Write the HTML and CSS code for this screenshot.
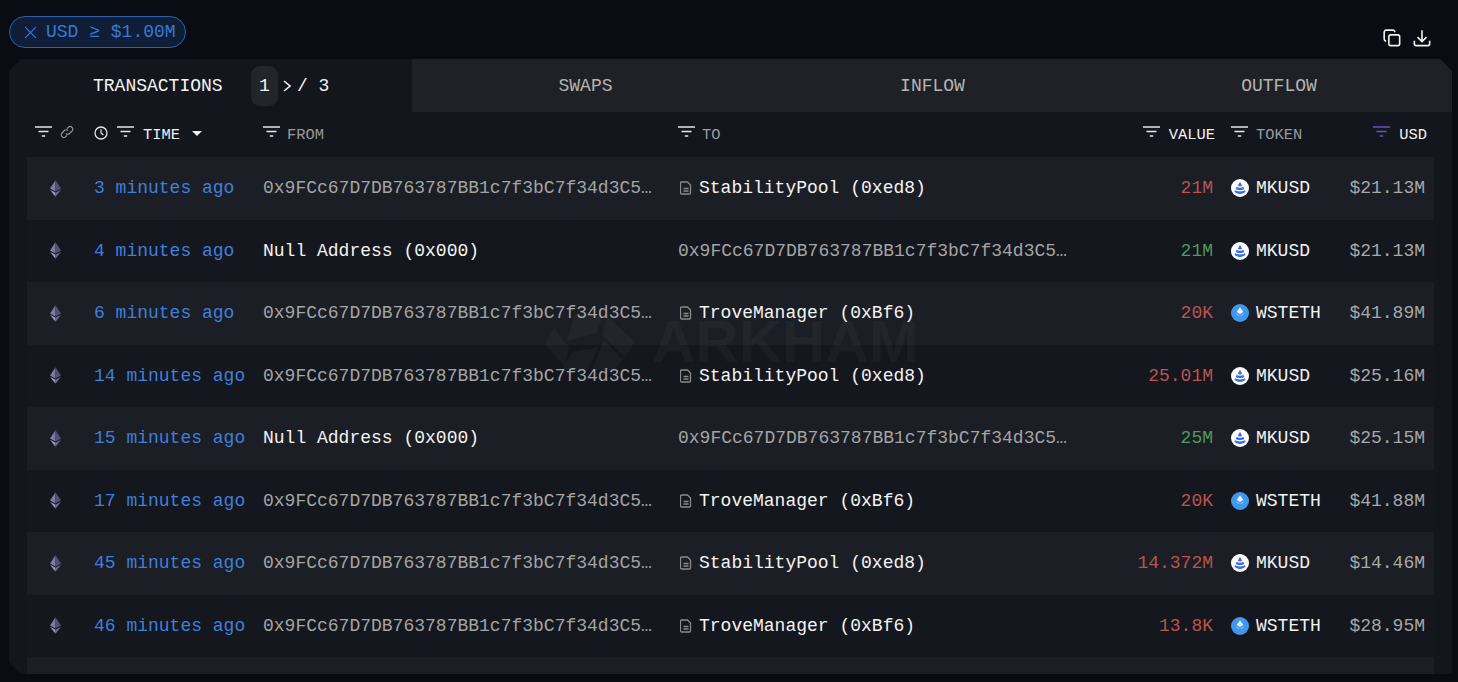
FILE: index.html
```html
<!DOCTYPE html>
<html lang="en">
<head>
<meta charset="utf-8">
<title>Transactions</title>
<link rel="stylesheet" href="styles.css">
</head>
<body>
<svg class="defs" width="0" height="0" aria-hidden="true">
  <symbol id="filter" viewBox="0 0 17 12"><path d="M0 1h17M3.500 5.500h10M6.800 10h3.400" fill="none" stroke="currentColor" stroke-width="1.700"/></symbol>
  <symbol id="eth" viewBox="0 0 12 18">
    <path d="M6 0 0 9l6 3.400z" fill="#7d7aa6"/><path d="M6 0l6 9-6 3.400z" fill="#53516f"/>
    <path d="M0 10.300 6 18v-4.400z" fill="#a09dc2"/><path d="M12 10.300 6 18v-4.400z" fill="#6f6c94"/>
  </symbol>
  <symbol id="doc" viewBox="0 0 12 14"><path d="M1.500 1h6l3 3v8a1 1 0 0 1-1 1h-8a1 1 0 0 1-1-1V2a1 1 0 0 1 1-1zM3.500 7.500h5M3.500 10h5" fill="none" stroke="#8a8a8a" stroke-width="1.300"/></symbol>
  <symbol id="mk" viewBox="0 0 18 18">
    <circle cx="9" cy="9" r="9" fill="#fff"/>
    <path d="M9 2.800 11.200 6.800a2.400 1.300 0 0 1-4.400 0z" fill="#3d6fe0"/>
    <path d="M5.700 7.800a3.600 1.700 0 0 0 6.600 0l1.100 2.200a5 2.200 0 0 1-8.800 0z" fill="#3d6fe0"/>
    <path d="M4 11.300a5.600 2 0 0 0 10 0l.6 1.300c-1 1.500-3.200 2.400-5.600 2.400s-4.600-.9-5.600-2.400z" fill="#3d6fe0"/>
  </symbol>
  <symbol id="st" viewBox="0 0 18 18">
    <circle cx="9" cy="9" r="9" fill="#3f97ee"/>
    <path d="M9 3.200 12.400 8 9 10 5.600 8z" fill="#e6f2fd"/>
    <path d="M4.900 9.300 9 11.700l4.100-2.400a4.600 4.600 0 0 1-8.200 0z" fill="#bcdcfa"/>
  </symbol>
</svg>

<div class="toolbar">
  <div class="chip">
    <svg class="chip-x" viewBox="0 0 12 12"><path d="M1 1l10 10M11 1 1 11" fill="none" stroke="currentColor" stroke-width="1.100"/></svg>
    <span>USD ≥ $1.00M</span>
  </div>
  <div class="actions">
    <svg class="act" viewBox="0 0 20 20"><rect x="6.500" y="6.500" width="12" height="12" rx="2" fill="none" stroke="currentColor" stroke-width="1.800"/><path d="M3.500 13.300A2.200 2.200 0 0 1 1.300 11V3.500A2.200 2.200 0 0 1 3.500 1.300H11a2.200 2.200 0 0 1 2.200 2.200" fill="none" stroke="currentColor" stroke-width="1.800"/></svg>
    <svg class="act" viewBox="0 0 20 20"><path d="M10 1.500v12M5 9l5 5 5-5M1.500 13v3.500a2 2 0 0 0 2 2h13a2 2 0 0 0 2-2V13" fill="none" stroke="currentColor" stroke-width="1.800"/></svg>
  </div>
</div>

<main class="panel">
  <div class="tabs">
    <div class="tab tab-active">
      <span class="tab-title">TRANSACTIONS</span>
      <span class="page-box">1</span>
      <svg class="page-next" viewBox="0 0 8 12"><path d="M1 1l6 5-6 5" fill="none" stroke="currentColor" stroke-width="1.500"/></svg>
      <span class="page-total">/ 3</span>
    </div>
    <div class="tab">SWAPS</div>
    <div class="tab">INFLOW</div>
    <div class="tab">OUTFLOW</div>
  </div>

  <div class="grid head">
    <div class="hc hc-first"><svg class="fi"><use href="#filter"/></svg>
      <svg class="link" viewBox="0 0 14 14"><path d="M6 8.500a2.500 2.500 0 0 0 3.600 0l2.400-2.500a2.600 2.600 0 0 0-3.700-3.700L7 3.600M8 5.500a2.500 2.500 0 0 0-3.600 0L2 8a2.600 2.600 0 0 0 3.700 3.700L7 10.400" fill="none" stroke="#9a9a9a" stroke-width="1.100"/></svg></div>
    <div class="hc"><svg class="clock" viewBox="0 0 14 14"><circle cx="7" cy="7" r="6" fill="none" stroke="currentColor" stroke-width="1.300"/><path d="M7 3.200V7l2.400 2" fill="none" stroke="currentColor" stroke-width="1.200"/></svg><svg class="fi"><use href="#filter"/></svg><span class="bright title">TIME</span><i class="caret"></i></div>
    <div class="hc"><svg class="fi"><use href="#filter"/></svg><span class="title tight">FROM</span></div>
    <div class="hc"><svg class="fi"><use href="#filter"/></svg><span class="title tight">TO</span></div>
    <div class="hc right shift-1"><svg class="fi"><use href="#filter"/></svg><span class="bright title">VALUE</span></div>
    <div class="hc pad"><svg class="fi"><use href="#filter"/></svg><span class="title snug">TOKEN</span></div>
    <div class="hc right shift-2"><svg class="fi fi-on"><use href="#filter"/></svg><span class="bright title">USD</span></div>
  </div>

  <div class="rows">
    <div class="watermark" aria-hidden="true">
      <svg class="wm-logo" viewBox="0 0 90 56">
        <path d="M30 0H58L52 19 22 27z M62 2 90 28 80 43 57 21z M59 26 78 46 69 56H47z M43 56H17L27 38 53 33z M20 53 0 30 9 14 24 33z" fill="currentColor"/>
      </svg>
      <span>ARKHAM</span>
    </div>

    <div class="grid row">
      <div class="c-eth"><svg class="eth"><use href="#eth"/></svg></div>
      <div class="time">3 minutes ago</div>
      <div class="addr">0x9FCc67D7DB763787BB1c7f3bC7f34d3C5…</div>
      <div class="name"><svg class="doc"><use href="#doc"/></svg>StabilityPool (0xed8)</div>
      <div class="val red">21M</div>
      <div class="tok"><svg class="ti"><use href="#mk"/></svg>MKUSD</div>
      <div class="usd">$21.13M</div>
    </div>
    <div class="grid row">
      <div class="c-eth"><svg class="eth"><use href="#eth"/></svg></div>
      <div class="time">4 minutes ago</div>
      <div class="name">Null Address (0x000)</div>
      <div class="addr">0x9FCc67D7DB763787BB1c7f3bC7f34d3C5…</div>
      <div class="val green">21M</div>
      <div class="tok"><svg class="ti"><use href="#mk"/></svg>MKUSD</div>
      <div class="usd">$21.13M</div>
    </div>
    <div class="grid row">
      <div class="c-eth"><svg class="eth"><use href="#eth"/></svg></div>
      <div class="time">6 minutes ago</div>
      <div class="addr">0x9FCc67D7DB763787BB1c7f3bC7f34d3C5…</div>
      <div class="name"><svg class="doc"><use href="#doc"/></svg>TroveManager (0xBf6)</div>
      <div class="val red">20K</div>
      <div class="tok"><svg class="ti"><use href="#st"/></svg>WSTETH</div>
      <div class="usd">$41.89M</div>
    </div>
    <div class="grid row">
      <div class="c-eth"><svg class="eth"><use href="#eth"/></svg></div>
      <div class="time">14 minutes ago</div>
      <div class="addr">0x9FCc67D7DB763787BB1c7f3bC7f34d3C5…</div>
      <div class="name"><svg class="doc"><use href="#doc"/></svg>StabilityPool (0xed8)</div>
      <div class="val red">25.01M</div>
      <div class="tok"><svg class="ti"><use href="#mk"/></svg>MKUSD</div>
      <div class="usd">$25.16M</div>
    </div>
    <div class="grid row">
      <div class="c-eth"><svg class="eth"><use href="#eth"/></svg></div>
      <div class="time">15 minutes ago</div>
      <div class="name">Null Address (0x000)</div>
      <div class="addr">0x9FCc67D7DB763787BB1c7f3bC7f34d3C5…</div>
      <div class="val green">25M</div>
      <div class="tok"><svg class="ti"><use href="#mk"/></svg>MKUSD</div>
      <div class="usd">$25.15M</div>
    </div>
    <div class="grid row">
      <div class="c-eth"><svg class="eth"><use href="#eth"/></svg></div>
      <div class="time">17 minutes ago</div>
      <div class="addr">0x9FCc67D7DB763787BB1c7f3bC7f34d3C5…</div>
      <div class="name"><svg class="doc"><use href="#doc"/></svg>TroveManager (0xBf6)</div>
      <div class="val red">20K</div>
      <div class="tok"><svg class="ti"><use href="#st"/></svg>WSTETH</div>
      <div class="usd">$41.88M</div>
    </div>
    <div class="grid row">
      <div class="c-eth"><svg class="eth"><use href="#eth"/></svg></div>
      <div class="time">45 minutes ago</div>
      <div class="addr">0x9FCc67D7DB763787BB1c7f3bC7f34d3C5…</div>
      <div class="name"><svg class="doc"><use href="#doc"/></svg>StabilityPool (0xed8)</div>
      <div class="val red">14.372M</div>
      <div class="tok"><svg class="ti"><use href="#mk"/></svg>MKUSD</div>
      <div class="usd">$14.46M</div>
    </div>
    <div class="grid row">
      <div class="c-eth"><svg class="eth"><use href="#eth"/></svg></div>
      <div class="time">46 minutes ago</div>
      <div class="addr">0x9FCc67D7DB763787BB1c7f3bC7f34d3C5…</div>
      <div class="name"><svg class="doc"><use href="#doc"/></svg>TroveManager (0xBf6)</div>
      <div class="val red">13.8K</div>
      <div class="tok"><svg class="ti"><use href="#st"/></svg>WSTETH</div>
      <div class="usd">$28.95M</div>
    </div>
    <div class="grid row row-cut"></div>
  </div>
</main>
</body>
</html>
```

FILE: styles.css
```css
* { box-sizing: border-box; }
html, body { height: 100%; }
body {
  margin: 0;
  padding: 16px 6px 8px 9px;
  background: #0a0c13;
  color: #f2f2f2;
  font-family: "Liberation Mono", "DejaVu Sans Mono", monospace;
  font-size: 18px;
  overflow: hidden;
}
.defs { position: absolute; }

.toolbar { display: flex; justify-content: space-between; height: 43px; }
.chip {
  display: flex; align-items: center; gap: 9px;
  width: 177px; height: 32px;
  padding-left: 14px;
  border: 1px solid #2a62ad;
  border-radius: 16px;
  background: #0f1e36;
  color: #3a78d2;
}
.chip-x { width: 13px; height: 13px; }
.actions { display: flex; gap: 12px; padding: 13px 21px 0 0; color: #f0f0f0; }
.act { width: 18px; height: 18px; }

.panel {
  height: 615px;
  background: #14161d;
  overflow: hidden;
  clip-path: polygon(12px 0, calc(100% - 12px) 0, 100% 12px, 100% 100%, 12px 100%, 0 calc(100% - 12px), 0 12px);
}

.tabs { display: grid; grid-template-columns: 403px 347px 347px 346px; height: 53px; }
.tab {
  display: flex; align-items: center; justify-content: center;
  background: #1f2126;
  color: #b4b4b4;
}
.tab-active { justify-content: flex-start; padding-left: 84px; background: #14161d; color: #f4f4f4; }
.tab-title { width: 158px; }
.page-box {
  display: flex; align-items: center; justify-content: center;
  width: 27px; height: 40px;
  border-radius: 9px;
  background: #22252b;
}
.page-next { width: 8px; height: 12px; margin: 0 6px 0 5px; }

.grid {
  display: grid;
  grid-template-columns: 67px 169px 415px 402px 134px 120px 91px;
  margin: 0 18px;
  align-items: center;
}
.head { height: 45px; font-size: 15.400px; color: #9a9a9a; }
.hc { display: flex; align-items: center; color: #e6e6e6; }
.hc-first { padding-left: 8px; gap: 8px; }
.hc.right { justify-content: flex-end; }
.hc.pad { padding-left: 17px; }
.shift-1 { margin-right: -1px; }
.shift-2 { margin-right: -2px; }
.title { margin-left: 9px; color: #9a9a9a; }
.title.tight { margin-left: 7px; }
.title.snug { margin-left: 8px; }
.title.bright { color: #f2f2f2; }
.fi { width: 17px; height: 12px; color: #e6e6e6; margin-top: -5px; }
.fi-on { color: #6a4fc0; }
.link { width: 14px; height: 14px; margin-top: -5px; }
.clock { width: 14px; height: 14px; margin: -4px 9px 0 0; }
.caret {
  width: 0; height: 0; margin-left: 12px; margin-top: -3px;
  border-left: 5px solid transparent; border-right: 5px solid transparent; border-top: 5px solid #f0f0f0;
}

.rows { position: relative; }
.row { height: 62.500px; background: #14171e; }
.row:nth-of-type(even) { background: #1b1e25; }
.row-cut { height: 30px; }
.c-eth { padding-left: 23px; display: flex; }
.eth { width: 11px; height: 17px; }
.time { color: #3f7fdc; white-space: nowrap; }
.addr { color: #a4a4a4; white-space: nowrap; overflow: hidden; text-overflow: ellipsis; padding-right: 10px; }
.name { color: #f4f4f4; white-space: nowrap; display: flex; align-items: center; }
.doc { width: 12px; height: 14px; margin: 0 7px 0 2px; flex: none; }
.val { text-align: right; padding-right: 1px; }
.red { color: #b9544f; }
.green { color: #4f9a5c; }
.tok { display: flex; align-items: center; gap: 7px; padding-left: 17px; color: #f2f2f2; }
.ti { width: 18px; height: 18px; }
.usd { text-align: right; color: #a8a8a8; white-space: nowrap; }

.watermark {
  position: absolute; left: 536px; top: 155px; z-index: 2;
  display: flex; align-items: center; gap: 17px;
  color: rgba(255, 255, 255, 0.03);
  font-family: "Liberation Sans", sans-serif;
  font-weight: 700; font-size: 60px; line-height: 60px;
  pointer-events: none;
}
.wm-logo { width: 90px; height: 56px; }
```
